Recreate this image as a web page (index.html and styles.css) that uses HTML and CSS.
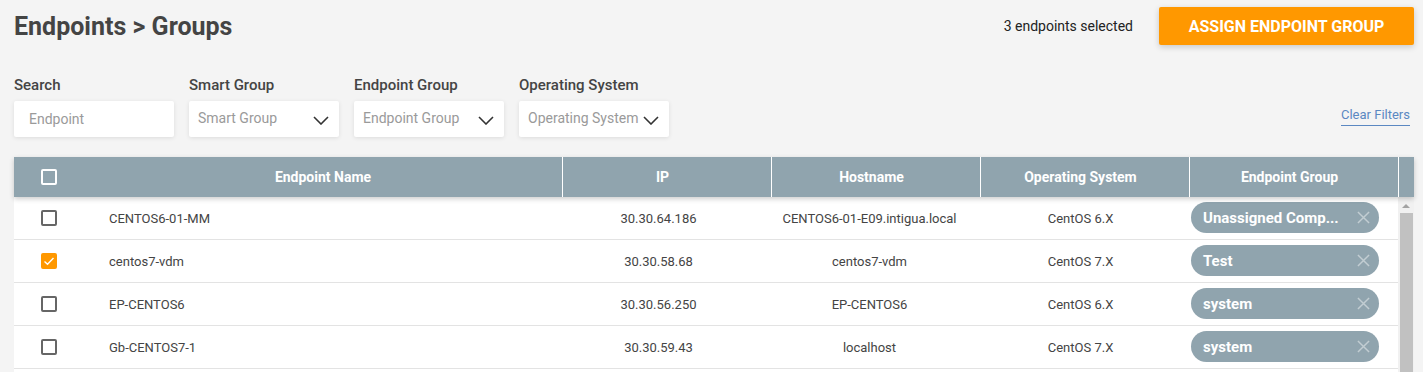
FILE: index.html
```html
<!DOCTYPE html>
<html lang="en">
<head>
    <meta charset="UTF-8">
    <meta name="viewport" content="width=device-width, initial-scale=1.0">
    <title>Endpoints - Groups</title>
    <link rel="stylesheet" href="styles.css">
</head>
<body>

    <main class="page">
        <div class="page-header">
            <h1>Endpoints &gt; Groups</h1>
            <div class="header-actions">
                <span class="selected-count">3 endpoints selected</span>
                <button class="assign-button">Assign Endpoint Group</button>
            </div>
        </div>

        <div class="filters">
            <div class="filter-group">
                <label for="search">Search</label>
                <input id="search" class="filter-input" type="text" placeholder="Endpoint">
            </div>
            <div class="filter-group">
                <label>Smart Group</label>
                <div class="filter-select">
                    <span>Smart Group</span>
                    <svg viewBox="0 0 16 9"><path d="M1 1l7 7 7-7"/></svg>
                </div>
            </div>
            <div class="filter-group">
                <label>Endpoint Group</label>
                <div class="filter-select">
                    <span>Endpoint Group</span>
                    <svg viewBox="0 0 16 9"><path d="M1 1l7 7 7-7"/></svg>
                </div>
            </div>
            <div class="filter-group">
                <label>Operating System</label>
                <div class="filter-select">
                    <span>Operating System</span>
                    <svg viewBox="0 0 16 9"><path d="M1 1l7 7 7-7"/></svg>
                </div>
            </div>
            <a href="#" class="clear-filters">Clear Filters</a>
        </div>

        <div class="endpoints-table">
            <div class="table-head">
                <div class="cell check-cell"><span class="checkbox light"></span></div>
                <div class="cell">Endpoint Name</div>
                <div class="cell divided">IP</div>
                <div class="cell divided">Hostname</div>
                <div class="cell divided">Operating System</div>
                <div class="cell divided">Endpoint Group</div>
                <div class="cell divided"></div>
            </div>

            <div class="table-body">
                <div class="rows">
                    <div class="row">
                        <div class="cell check-cell"><span class="checkbox"></span></div>
                        <div class="cell name-cell">CENTOS6-01-MM</div>
                        <div class="cell">30.30.64.186</div>
                        <div class="cell">CENTOS6-01-E09.intigua.local</div>
                        <div class="cell">CentOS 6.X</div>
                        <div class="cell group-cell"><span class="chip">Unassigned Comp...<svg viewBox="0 0 14 14"><path d="M1 1l12 12M13 1L1 13"/></svg></span></div>
                    </div>
                    <div class="row">
                        <div class="cell check-cell"><span class="checkbox checked"><svg viewBox="0 0 16 16"><path d="M3.5 8.5l3 2.8 6-6.3"/></svg></span></div>
                        <div class="cell name-cell">centos7-vdm</div>
                        <div class="cell">30.30.58.68</div>
                        <div class="cell">centos7-vdm</div>
                        <div class="cell">CentOS 7.X</div>
                        <div class="cell group-cell"><span class="chip">Test<svg viewBox="0 0 14 14"><path d="M1 1l12 12M13 1L1 13"/></svg></span></div>
                    </div>
                    <div class="row">
                        <div class="cell check-cell"><span class="checkbox"></span></div>
                        <div class="cell name-cell">EP-CENTOS6</div>
                        <div class="cell">30.30.56.250</div>
                        <div class="cell">EP-CENTOS6</div>
                        <div class="cell">CentOS 6.X</div>
                        <div class="cell group-cell"><span class="chip">system<svg viewBox="0 0 14 14"><path d="M1 1l12 12M13 1L1 13"/></svg></span></div>
                    </div>
                    <div class="row">
                        <div class="cell check-cell"><span class="checkbox"></span></div>
                        <div class="cell name-cell">Gb-CENTOS7-1</div>
                        <div class="cell">30.30.59.43</div>
                        <div class="cell">localhost</div>
                        <div class="cell">CentOS 7.X</div>
                        <div class="cell group-cell"><span class="chip">system<svg viewBox="0 0 14 14"><path d="M1 1l12 12M13 1L1 13"/></svg></span></div>
                    </div>
                </div>
                <div class="scrollbar">
                    <div class="scroll-arrow"></div>
                    <div class="scroll-thumb"></div>
                </div>
            </div>
        </div>
    </main>

</body>
</html>
```

FILE: styles.css
```css
:root {
    --main-bg: #F4F4F4;
    --card-bg: #FFFFFF;
    --primary-orange: #FF9800;
    --header-grey: #90A4AE;
    --text-dark: #444444;
    --text-black: #222222;
    --text-placeholder: #9A9A9A;
    --link-blue: #5B88C2;
    --border-color: #E3E3E3;
    --font-family: 'Roboto', 'Liberation Sans', sans-serif;
}
*, *::before, *::after { box-sizing: border-box; }
body { margin: 0; font-family: var(--font-family); background-color: var(--main-bg); color: var(--text-dark); font-size: 13px; overflow: hidden; }
.page { padding: 7px 9px 0 14px; }

.page-header { display: flex; justify-content: space-between; align-items: center; height: 38px; }
.page-header h1 { margin: 0; font-size: 25px; font-weight: 700; color: var(--text-dark); }
.header-actions { display: flex; align-items: center; gap: 26px; margin-top: -1px; }
.selected-count { font-size: 14px; color: var(--text-black); }
.assign-button {
    width: 255px; height: 38px; border: none; border-radius: 2px;
    background-color: var(--primary-orange); color: white; font-family: inherit;
    font-size: 16px; font-weight: 700; text-transform: uppercase;
    box-shadow: 0 2px 6px rgba(0, 0, 0, 0.18); cursor: pointer; margin-top: 1px;
}

.filters { display: flex; align-items: flex-end; gap: 15px; margin-top: 31px; }
.filter-group label { display: block; font-size: 15px; font-weight: 500; line-height: 18px; margin-bottom: 7px; color: var(--text-dark); }
.filter-input, .filter-select {
    height: 36px; background-color: var(--card-bg); border: none; border-radius: 2px;
    box-shadow: 0 1px 4px rgba(0, 0, 0, 0.1); font-family: inherit; font-size: 14px;
}
.filter-input { width: 160px; padding: 0 15px; outline: none; }
.filter-input::placeholder { color: var(--text-placeholder); }
.filter-select { width: 150px; display: flex; align-items: center; justify-content: space-between; padding: 0 10px 0 9px; color: var(--text-placeholder); }
.filter-select span { margin-top: -3px; white-space: nowrap; }
.filter-select svg { width: 16px; height: 9px; fill: none; stroke: #333; stroke-width: 1.6; flex-shrink: 0; margin-top: 2px; }
.clear-filters {
    margin-left: auto; margin-right: 4px; margin-bottom: 11px; font-size: 13px; color: var(--link-blue);
    text-decoration: none; border-bottom: 1px solid var(--link-blue); padding-bottom: 3px; line-height: 14px;
}

.endpoints-table { margin-top: 20px; }
.table-head {
    display: grid; grid-template-columns: 79px 469px 209px 209px 209px 209px 16px; height: 40px;
    background-color: var(--header-grey); color: white; font-size: 14px; font-weight: 700;
    position: relative; z-index: 1; box-shadow: 0 2px 5px rgba(0, 0, 0, 0.2);
}
.table-head .cell { display: flex; align-items: center; justify-content: center; padding-right: 9px; }
.table-head .divided { border-left: 1px solid white; }

.table-body { display: flex; min-height: 200px; }
.rows { width: 1384px; background-color: var(--card-bg); }
.row { display: grid; grid-template-columns: 70px 469px 211px 211px 211px 212px; height: 43px; border-bottom: 1px solid var(--border-color); }
.row .cell { display: flex; align-items: center; justify-content: center; }
.row .name-cell { justify-content: flex-start; padding-left: 25px; }
.row .group-cell { justify-content: flex-start; padding-left: 5px; }

.checkbox { display: flex; align-items: center; justify-content: center; width: 16px; height: 16px; border: 2px solid #666; border-radius: 2px; }
.check-cell .checkbox { margin-top: -1px; }
.checkbox.light { border-color: white; }
.checkbox.checked { background-color: var(--primary-orange); border-color: var(--primary-orange); }
.checkbox.checked svg { width: 16px; height: 16px; flex-shrink: 0; fill: none; stroke: white; stroke-width: 1.4; }

.chip {
    display: flex; align-items: center; justify-content: space-between; width: 188px; height: 31px;
    padding: 0 9px 0 12px; border-radius: 16px; background-color: var(--header-grey);
    color: white; font-size: 15px; font-weight: 700; margin-top: -1px;
}
.chip svg { width: 13px; height: 13px; fill: none; stroke: rgba(255, 255, 255, 0.45); stroke-width: 1.6; }

.scrollbar { width: 16px; background-color: #F1F1F1; display: flex; flex-direction: column; align-items: center; }
.scroll-arrow { width: 0; height: 0; margin-top: 7px; border-left: 4px solid transparent; border-right: 4px solid transparent; border-bottom: 4px solid #A3A3A3; }
.scroll-thumb { width: 13px; flex-grow: 1; margin-top: 5px; margin-left: 1px; background-color: #C1C1C1; }
```
